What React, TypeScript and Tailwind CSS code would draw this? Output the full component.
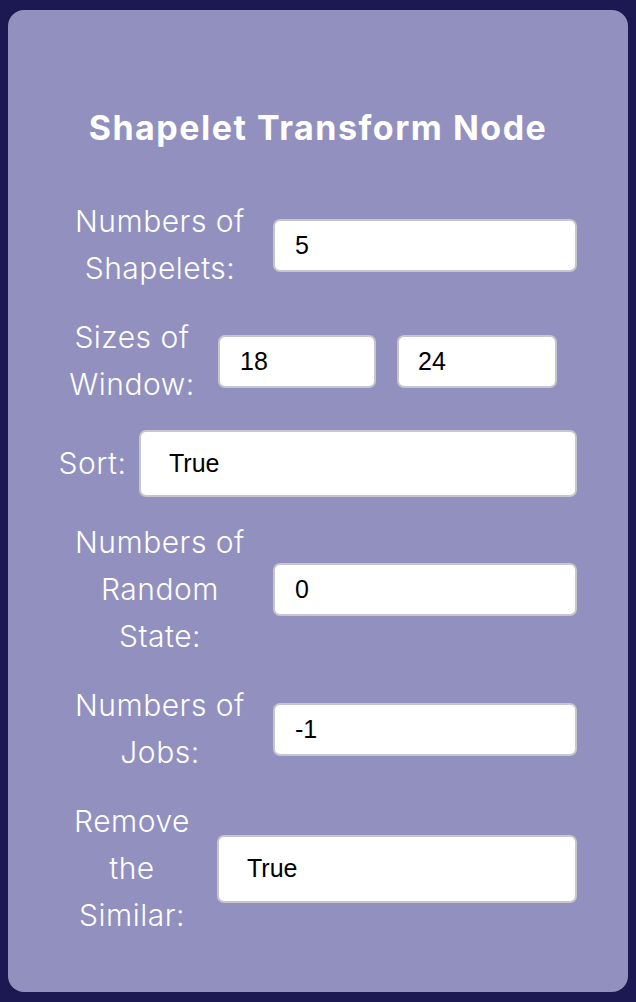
import React from "react";

type FieldProps = {
  value: string;
  className: string;
};

function Field({ value, className }: FieldProps) {
  return (
    <input
      readOnly
      defaultValue={value}
      className={`shrink-0 rounded-[7px] border-2 border-[#c6c6cc] bg-white text-[25px] tracking-normal text-black outline-none font-['Liberation_Sans',Arial,sans-serif] ${className}`}
    />
  );
}

export default function App() {
  return (
    <div className="min-h-screen bg-[#1b1852] px-2 pt-[10px] pb-[10px] font-['Inter','Noto_Sans',sans-serif]">
      <div className="h-[982px] rounded-[16px] bg-[#9290be] pt-[98px]">
        <h1 className="text-center text-[34px] leading-[40px] tracking-[1.5px] font-bold text-white">Shapelet Transform Node</h1>

        <div className="mt-[50px] flex flex-col gap-[22px] text-[30px] leading-[47px] tracking-[0.5px] font-light text-white">
          <div className="flex items-center pl-[52px]">
            <div className="w-[200px] text-center">Numbers of<br />Shapelets:</div>
            <Field value="5" className="ml-[13px] h-[53px] w-[304px] pl-[20px]" />
          </div>

          <div className="flex items-center pl-[59px]">
            <div className="w-[130px] text-center">Sizes of<br />Window:</div>
            <Field value="18" className="ml-[21px] h-[53px] w-[158px] pl-[20px]" />
            <Field value="24" className="ml-[21px] h-[53px] w-[160px] pl-[19px]" />
          </div>

          <div className="flex items-center pl-[44px]">
            <div className="w-[81px] text-center">Sort:</div>
            <Field value="True" className="ml-[6px] h-[67px] w-[438px] pl-[28px]" />
          </div>

          <div className="flex items-center pl-[52px]">
            <div className="w-[200px] text-center">Numbers of<br />Random<br />State:</div>
            <Field value="0" className="ml-[13px] h-[53px] w-[304px] pl-[20px]" />
          </div>

          <div className="flex items-center pl-[52px]">
            <div className="w-[200px] text-center">Numbers of<br />Jobs:</div>
            <Field value="-1" className="ml-[13px] h-[53px] w-[304px] pl-[20px]" />
          </div>

          <div className="flex items-center pl-[59px]">
            <div className="w-[130px] text-center">Remove<br />the<br />Similar:</div>
            <Field value="True" className="ml-[20px] h-[68px] w-[360px] pl-[28px]" />
          </div>
        </div>
      </div>
    </div>
  );
}
